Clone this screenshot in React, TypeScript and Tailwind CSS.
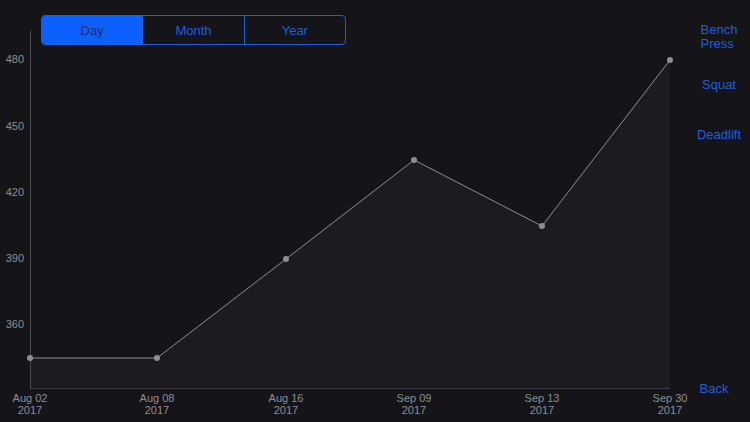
import { useState } from "react";

const points = [
  { x: 30, y: 358, label: "Aug 02" },
  { x: 157, y: 358, label: "Aug 08" },
  { x: 286, y: 259, label: "Aug 16" },
  { x: 414, y: 160, label: "Sep 09" },
  { x: 542, y: 226, label: "Sep 13" },
  { x: 670, y: 60, label: "Sep 30" }
];

const yTicks = [
  { y: 59, label: "480" },
  { y: 126, label: "450" },
  { y: 192, label: "420" },
  { y: 258, label: "390" },
  { y: 324, label: "360" }
];

const ranges = ["Day", "Month", "Year"];

export default function App() {
  const [range, setRange] = useState("Day");
  const line = points.map((p) => `${p.x},${p.y}`).join(" ");
  const area = `30,388 ${line} 670,388`;

  return (
    <main
      className="flex h-[422px] w-[750px] overflow-hidden bg-[#151419]"
      style={{ fontFamily: '"Liberation Sans", Arial, sans-serif' }}
    >
      <section className="relative w-[690px] shrink-0">
        <svg width="690" height="422" className="block">
          <polygon points={area} fill="#1c1b20" />
          <line x1="30.5" y1="31" x2="30.5" y2="388" stroke="#4a4a4f" strokeWidth="1" />
          <line x1="30" y1="388.5" x2="670" y2="388.5" stroke="#3a3a3f" strokeWidth="1" />
          <polyline points={line} fill="none" stroke="#8e8e93" strokeWidth="1" />
          {points.map((p) => (
            <circle key={p.label} cx={p.x} cy={p.y} r="3" fill="#8e8e93" />
          ))}
          {yTicks.map((t) => (
            <text key={t.label} x="24" y={t.y + 4} textAnchor="end" fontSize="11" fill="#8e8e93">
              {t.label}
            </text>
          ))}
          {points.map((p) => (
            <text key={p.label} x={p.x} textAnchor="middle" fontSize="11" fill="#8e8e93">
              <tspan x={p.x} y="402">{p.label}</tspan>
              <tspan x={p.x} y="414">2017</tspan>
            </text>
          ))}
        </svg>

        <div className="absolute left-[41px] top-[15px] flex h-[30px] w-[305px] overflow-hidden rounded-[4px] border border-[#1f5fd9]">
          {ranges.map((r, i) => (
            <button
              key={r}
              type="button"
              onClick={() => setRange(r)}
              className={
                "flex flex-1 items-center justify-center pt-[2px] text-[13px] " +
                (i > 0 ? "border-l border-[#1f5fd9] " : "") +
                (range === r ? "bg-[#0b60fe] text-[#1b2d5e]" : "text-[#1f5fd9]")
              }
            >
              {r}
            </button>
          ))}
        </div>
      </section>

      <aside className="flex flex-1 flex-col items-center pb-[26px] pr-[2px] pt-[23px] text-[13px] leading-[14px] text-[#1f5fd9]">
        <div className="text-left">
          Bench
          <br />
          Press
        </div>
        <div className="mt-[27px]">Squat</div>
        <div className="mt-[36px]">Deadlift</div>
        <div className="mt-auto pr-[10px]">Back</div>
      </aside>
    </main>
  );
}
